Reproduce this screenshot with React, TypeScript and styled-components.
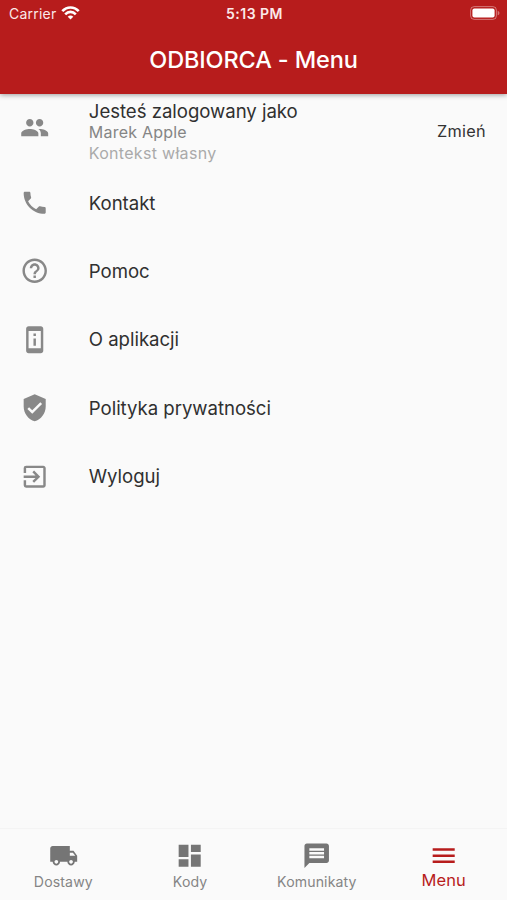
import React from "react";
import styled, { createGlobalStyle } from "styled-components";
import {
  MdPeople,
  MdPhone,
  MdHelpOutline,
  MdPermDeviceInformation,
  MdVerifiedUser,
  MdExitToApp,
  MdLocalShipping,
  MdDashboard,
  MdMessage,
  MdMenu,
} from "react-icons/md";

const Global = createGlobalStyle`
  * { box-sizing: border-box; }
  body { margin: 0; background: #fafafa; font-family: Inter, "Liberation Sans", sans-serif; }
`;

const Screen = styled.div`
  width: 100%;
  height: 100vh;
  display: flex;
  flex-direction: column;
  background: #fafafa;
  overflow: hidden;
`;

const Header = styled.header`
  height: 93.5px;
  flex: none;
  background: #b71c1c;
  color: #fff;
  box-shadow: 0 1px 5px rgba(0, 0, 0, 0.38);
  z-index: 1;
`;

const StatusBar = styled.div`
  height: 27px;
  padding: 0 7px 0 9px;
  display: grid;
  grid-template-columns: 1fr auto 1fr;
  align-items: center;
  font-size: 14px;
  line-height: 27px;
`;

const Carrier = styled.div`
  display: flex;
  align-items: center;
  gap: 5px;
  letter-spacing: 0.22px;
  color: #fbe9e9;
  svg { margin-top: -1px; }
`;

const Clock = styled.div`
  font-size: 14px;
  font-weight: 600;
  letter-spacing: 0.5px;
  color: #fbe9e9;
`;

const BatterySlot = styled.div`
  display: flex;
  justify-content: flex-end;
  svg { margin-top: -1px; }
`;

const Title = styled.h1`
  margin: 0;
  height: 66px;
  line-height: 66px;
  text-align: center;
  font-size: 23.5px;
  font-weight: 500;
  letter-spacing: -0.13px;
`;

const List = styled.main`
  flex: 1;
  display: flex;
  flex-direction: column;
`;

const Row = styled.div<{ $tall?: boolean }>`
  height: ${(p) => (p.$tall ? "75px" : "68.4px")};
  padding: 0 21px 0 20.3px;
  display: grid;
  grid-template-columns: 68.5px 1fr auto;
  align-items: center;
`;

const RowIcon = styled.span<{ $lift?: boolean }>`
  display: flex;
  font-size: 29.4px;
  color: #888;
  padding-bottom: ${(p) => (p.$lift ? "6px" : "0")};
`;

const Label = styled.div`
  font-size: 18.6px;
  line-height: 22px;
  letter-spacing: -0.03px;
  color: #303030;
  white-space: nowrap;
`;

const Account = styled.div`
  padding-top: 2px;
`;

const Detail = styled.div<{ $light?: boolean }>`
  font-size: 16px;
  line-height: 21px;
  letter-spacing: ${(p) => (p.$light ? "0.3px" : "0.22px")};
  color: ${(p) => (p.$light ? "#aaa" : "#858585")};
`;

const Change = styled.div`
  font-size: 16.3px;
  letter-spacing: 0.3px;
  padding-bottom: 1px;
  color: #333;
`;

const Nav = styled.nav`
  height: 72px;
  flex: none;
  display: grid;
  grid-template-columns: repeat(4, 1fr);
  border-top: 1px solid #f4f4f4;
`;

const Tab = styled.div<{ $active?: boolean }>`
  display: flex;
  flex-direction: column;
  align-items: center;
  padding-top: 12px;
  color: ${(p) => (p.$active ? "#b71c1c" : "#757575")};
  svg { font-size: 29.4px; flex: none; }
`;

const TabLabel = styled.span<{ $active?: boolean }>`
  font-size: ${(p) => (p.$active ? "16.5px" : "14.1px")};
  line-height: 20px;
  margin-top: ${(p) => (p.$active ? "0" : "2px")};
  letter-spacing: ${(p) => (p.$active ? "0" : "0.13px")};
  color: ${(p) => (p.$active ? "#b71c1c" : "#858585")};
`;

const Wifi = () => (
  <svg width="19" height="14" viewBox="0 0 19 14" fill="none" stroke="#fff" strokeWidth="2.6">
    <path d="M1.3 5.2C6 .2 13 .2 17.7 5.2" />
    <path d="M4.2 8.3C7.3 5.1 11.7 5.1 14.8 8.3" />
    <path d="M9.5 13.6 6.7 10.7C8.3 9.2 10.7 9.2 12.3 10.7Z" fill="#fff" stroke="none" />
  </svg>
);

const Battery = () => (
  <svg width="30" height="14" viewBox="0 0 30 14">
    <rect x=".6" y=".6" width="25.8" height="12.8" rx="3.6" fill="none" stroke="#fff" strokeOpacity=".4" />
    <rect x="2.4" y="2.4" width="22.2" height="9.2" rx="2" fill="#fff" />
    <path d="M27.7 4.7C30 5.5 30 8.5 27.7 9.3Z" fill="#fff" fillOpacity=".4" />
  </svg>
);

const items = [
  { icon: MdPhone, label: "Kontakt" },
  { icon: MdHelpOutline, label: "Pomoc" },
  { icon: MdPermDeviceInformation, label: "O aplikacji" },
  { icon: MdVerifiedUser, label: "Polityka prywatności" },
  { icon: MdExitToApp, label: "Wyloguj" },
];

const tabs = [
  { icon: MdLocalShipping, label: "Dostawy" },
  { icon: MdDashboard, label: "Kody" },
  { icon: MdMessage, label: "Komunikaty" },
  { icon: MdMenu, label: "Menu", active: true },
];

export default function App() {
  return (
    <Screen>
      <Global />
      <Header>
        <StatusBar>
          <Carrier>
            Carrier
            <Wifi />
          </Carrier>
          <Clock>5:13 PM</Clock>
          <BatterySlot>
            <Battery />
          </BatterySlot>
        </StatusBar>
        <Title>ODBIORCA - Menu</Title>
      </Header>
      <List>
        <Row $tall>
          <RowIcon $lift>
            <MdPeople />
          </RowIcon>
          <Account>
            <Label>Jesteś zalogowany jako</Label>
            <Detail>Marek Apple</Detail>
            <Detail $light>Kontekst własny</Detail>
          </Account>
          <Change>Zmień</Change>
        </Row>
        {items.map(({ icon: Icon, label }) => (
          <Row key={label}>
            <RowIcon>
              <Icon />
            </RowIcon>
            <Label>{label}</Label>
          </Row>
        ))}
      </List>
      <Nav>
        {tabs.map(({ icon: Icon, label, active }) => (
          <Tab key={label} $active={active}>
            <Icon />
            <TabLabel $active={active}>{label}</TabLabel>
          </Tab>
        ))}
      </Nav>
    </Screen>
  );
}
